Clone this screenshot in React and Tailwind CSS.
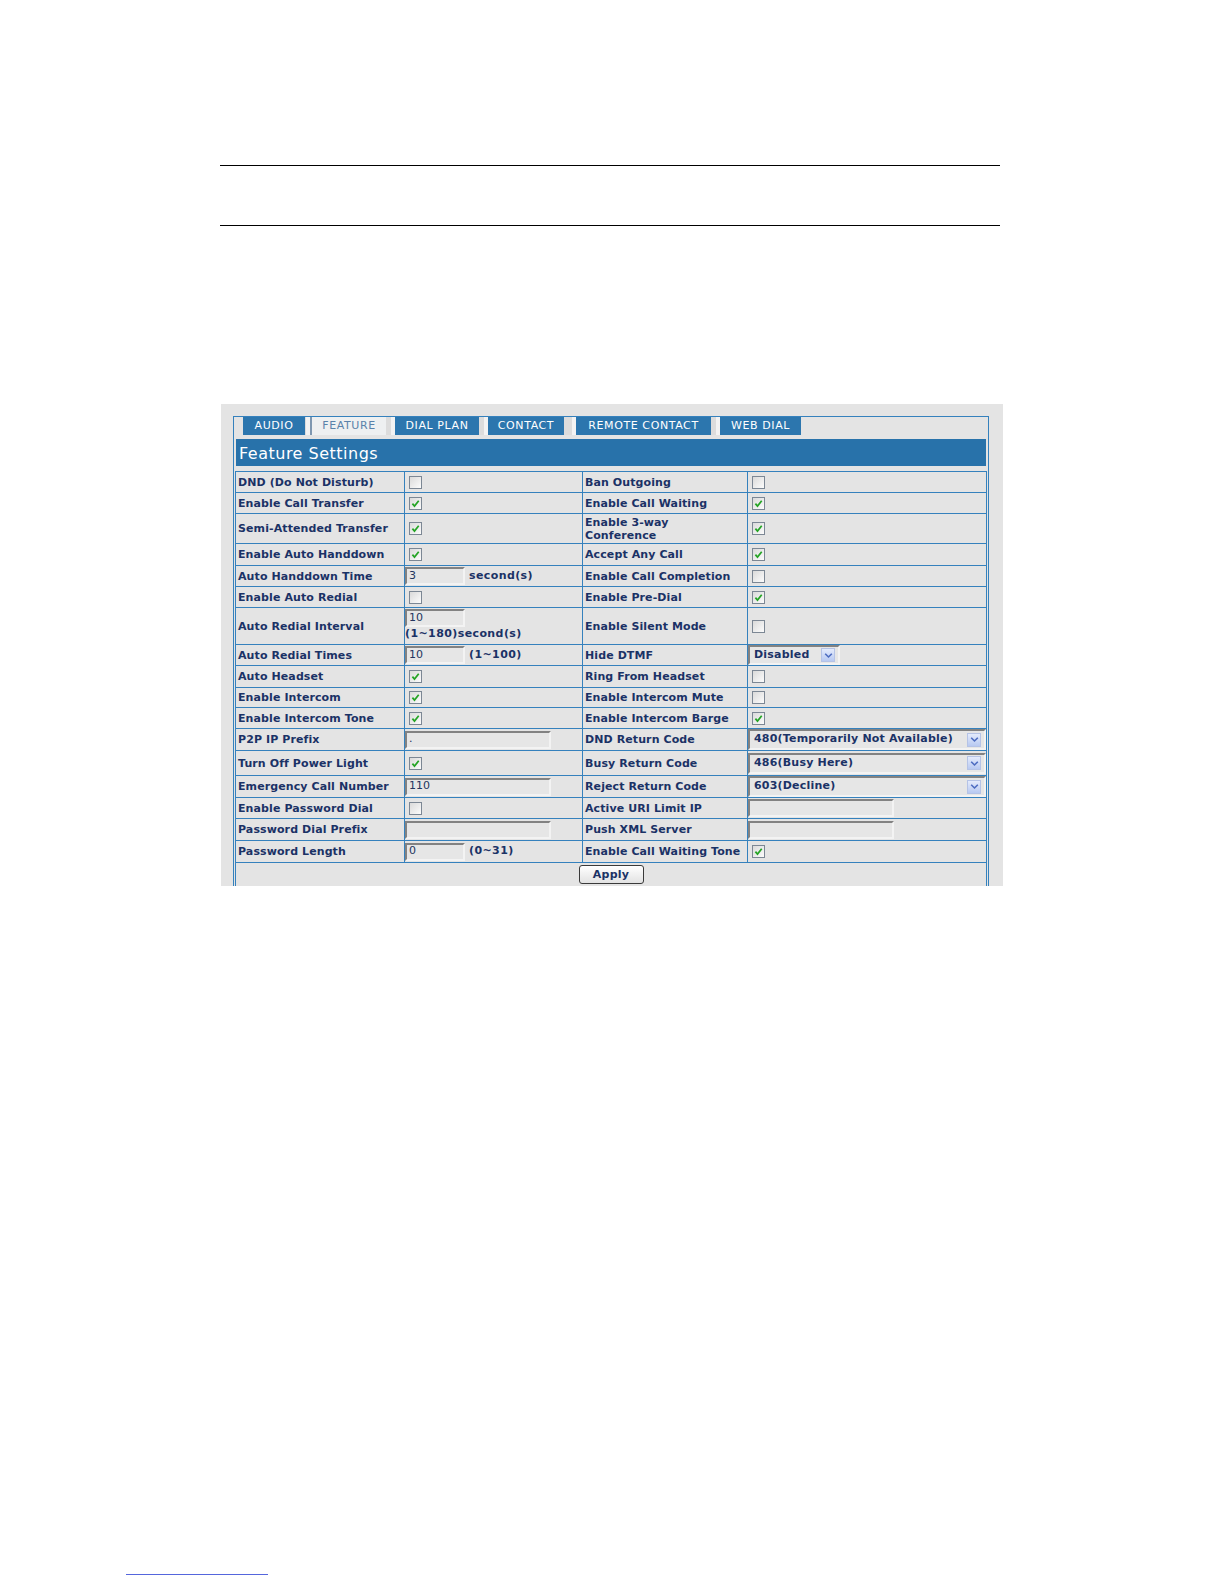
import React from 'react';

function Check({ on }) {
  return (
    <span className="flex w-[13px] h-[13px] border border-[#7c8794] bg-linear-to-br from-[#dadada] to-[#fcfcfc] items-center justify-center">
      {on && (
        <svg width="11" height="11" viewBox="0 0 11 11">
          <path d="M2.4 5.6 L4.5 8.1 L8.7 2.8" fill="none" stroke="#24a424" strokeWidth="1.7" />
        </svg>
      )}
    </span>
  );
}

function TextInput({ w, value }) {
  return (
    <span
      className={`${w} h-[18px] border-2 border-t-[#828282] border-l-[#828282] border-r-[#f3f3f3] border-b-[#f3f3f3] bg-[#e6e6e6] flex items-center pl-[2px] text-[11px] font-normal text-[#24355f]`}
    >
      {value}
    </span>
  );
}

function Arrow() {
  return (
    <span className="flex w-[14px] h-[14px] border border-[#b5c3e6] bg-linear-to-b from-[#e4ebfc] to-[#b8c9f1] items-center justify-center">
      <svg width="9" height="7" viewBox="0 0 9 7">
        <path d="M1.2 1.8 L4.5 5 L7.8 1.8" fill="none" stroke="#4d6cc0" strokeWidth="1.6" />
      </svg>
    </span>
  );
}

function Select({ w, h, value }) {
  return (
    <span
      className={`${w} ${h} border-2 border-t-[#828282] border-l-[#828282] border-r-[#f3f3f3] border-b-[#f3f3f3] bg-[#e6e6e6] flex items-center justify-between pl-[4px] pr-[3px] font-bold text-[11px] tracking-[0.2px] text-[#1b3266]`}
    >
      <span>{value}</span>
      <Arrow />
    </span>
  );
}

const cb = (on) => ({ type: 'cb', on });

const rows = [
  { h: 'h-[21px]', l: 'DND (Do Not Disturb)', lv: cb(false), r: 'Ban Outgoing', rv: cb(false) },
  { h: 'h-[21px]', l: 'Enable Call Transfer', lv: cb(true), r: 'Enable Call Waiting', rv: cb(true) },
  { h: 'h-[30px]', l: 'Semi-Attended Transfer', lv: cb(true), r: 'Enable 3-way', r2: 'Conference', rv: cb(true) },
  { h: 'h-[22px]', l: 'Enable Auto Handdown', lv: cb(true), r: 'Accept Any Call', rv: cb(true) },
  { h: 'h-[21px]', l: 'Auto Handdown Time', lv: { type: 'inunit', value: '3', unit: 'second(s)' }, r: 'Enable Call Completion', rv: cb(false) },
  { h: 'h-[21px]', l: 'Enable Auto Redial', lv: cb(false), r: 'Enable Pre-Dial', rv: cb(true) },
  { h: 'h-[37px]', l: 'Auto Redial Interval', lv: { type: 'instack', value: '10', unit: '(1~180)second(s)' }, r: 'Enable Silent Mode', rv: cb(false) },
  { h: 'h-[21px]', l: 'Auto Redial Times', lv: { type: 'inunit', value: '10', unit: '(1~100)' }, r: 'Hide DTMF', rv: { type: 'selshort', value: 'Disabled' } },
  { h: 'h-[22px]', l: 'Auto Headset', lv: cb(true), r: 'Ring From Headset', rv: cb(false) },
  { h: 'h-[20px]', l: 'Enable Intercom', lv: cb(true), r: 'Enable Intercom Mute', rv: cb(false) },
  { h: 'h-[21px]', l: 'Enable Intercom Tone', lv: cb(true), r: 'Enable Intercom Barge', rv: cb(true) },
  { h: 'h-[22px]', l: 'P2P IP Prefix', lv: { type: 'inlong', value: '.' }, r: 'DND Return Code', rv: { type: 'sellong', value: '480(Temporarily Not Available)' } },
  { h: 'h-[25px]', l: 'Turn Off Power Light', lv: cb(true), r: 'Busy Return Code', rv: { type: 'sellong', value: '486(Busy Here)' } },
  { h: 'h-[22px]', l: 'Emergency Call Number', lv: { type: 'inlong', value: '110' }, r: 'Reject Return Code', rv: { type: 'sellong', value: '603(Decline)' } },
  { h: 'h-[21px]', l: 'Enable Password Dial', lv: cb(false), r: 'Active URI Limit IP', rv: { type: 'inlong', value: '' } },
  { h: 'h-[22px]', l: 'Password Dial Prefix', lv: { type: 'inlong', value: '' }, r: 'Push XML Server', rv: { type: 'inlong', value: '' } },
  { h: 'h-[22px]', l: 'Password Length', lv: { type: 'inunit', value: '0', unit: '(0~31)' }, r: 'Enable Call Waiting Tone', rv: cb(true) },
];

const cellBase = 'border-r border-b border-[#3581bd] flex';

function Value({ v, h }) {
  if (v.type === 'cb') {
    return (
      <div className={`${cellBase} ${h} items-center pl-[4px]`}>
        <Check on={v.on} />
      </div>
    );
  }
  if (v.type === 'inunit') {
    return (
      <div className={`${cellBase} ${h} items-center gap-[4px]`}>
        <TextInput w="w-[60px]" value={v.value} />
        <span className="font-bold tracking-[0.4px]">{v.unit}</span>
      </div>
    );
  }
  if (v.type === 'instack') {
    return (
      <div className={`${cellBase} ${h} flex-col pt-px`}>
        <TextInput w="w-[60px]" value={v.value} />
        <span className="font-bold tracking-[0.4px] leading-[14px]">{v.unit}</span>
      </div>
    );
  }
  if (v.type === 'inlong') {
    return (
      <div className={`${cellBase} ${h} items-center`}>
        <TextInput w="w-[146px]" value={v.value} />
      </div>
    );
  }
  if (v.type === 'selshort') {
    return (
      <div className={`${cellBase} ${h} items-center`}>
        <Select w="w-[92px]" h="h-[20px]" value={v.value} />
      </div>
    );
  }
  return (
    <div className={`${cellBase} ${h} items-center`}>
      <Select w="w-[238px]" h="h-[21px]" value={v.value} />
    </div>
  );
}

function Label({ text, text2, h }) {
  return (
    <div className={`${cellBase} ${h} items-center px-[2px] font-bold leading-[13px] tracking-[0.1px]`}>
      {text2 ? (
        <span>
          {text}
          <br />
          {text2}
        </span>
      ) : (
        <span>{text}</span>
      )}
    </div>
  );
}

function Tab({ w, children, active }) {
  if (active) {
    return (
      <div className={`${w} h-full border-l-2 border-[#7f97b0] bg-[#eef0f1] text-[#5a82aa] flex items-center justify-center tracking-[0.6px]`}>
        {children}
      </div>
    );
  }
  return (
    <div className={`${w} h-full bg-[#2c76ae] text-white flex items-center justify-center tracking-[0.6px]`}>
      {children}
    </div>
  );
}

function Gap({ w }) {
  return (
    <div className={`${w} h-full bg-[#dcdcdc] flex justify-end`}>
      <div className="w-[4px] h-full bg-[#f3f3f3]" />
    </div>
  );
}

export default function App() {
  return (
    <div className="w-[1224px] h-[1584px] bg-white flex flex-col font-['DejaVu_Sans',sans-serif] text-[11px] text-[#1b3266]">
      <div className="mt-[165px] ml-[220px] w-[780px] h-px bg-black" />
      <div className="mt-[59px] ml-[220px] w-[780px] h-px bg-black" />

      <div className="mt-[178px] ml-[221px] w-[782px] h-[482px] bg-[#e4e4e4] pt-[12px] pl-[12px] overflow-hidden">
        <div className="w-[756px] h-[470px] border-l border-t border-r border-[#3581bd] px-px">
          <div className="flex h-[18px] pl-[8px] text-[11px]">
            <Tab w="w-[62px]">AUDIO</Tab>
            <Gap w="w-[5px]" />
            <Tab w="w-[76px]" active>FEATURE</Tab>
            <Gap w="w-[9px]" />
            <Tab w="w-[84px]">DIAL PLAN</Tab>
            <Gap w="w-[9px]" />
            <Tab w="w-[76px]">CONTACT</Tab>
            <Gap w="w-[12px]" />
            <Tab w="w-[135px]">REMOTE CONTACT</Tab>
            <Gap w="w-[9px]" />
            <Tab w="w-[81px]">WEB DIAL</Tab>
          </div>

          <div className="mt-[4px] mx-px h-[27px] bg-[#2872aa] flex items-center pl-[3px] pt-[3px] text-white text-[16px] tracking-[0.5px]">
            Feature Settings
          </div>

          <div className="mt-[5px] grid grid-cols-[169px_178px_165px_239px] border-l border-t border-[#3581bd]">
            {rows.map((row, i) => (
              <React.Fragment key={i}>
                <Label text={row.l} h={row.h} />
                <Value v={row.lv} h={row.h} />
                <Label text={row.r} text2={row.r2} h={row.h} />
                <Value v={row.rv} h={row.h} />
              </React.Fragment>
            ))}
            <div className="col-span-4 h-[24px] border-r border-[#3581bd] flex justify-center pt-[2px]">
              <button className="w-[65px] h-[19px] rounded-[3px] border border-[#3a3a3a] bg-linear-to-b from-[#ffffff] to-[#e2e2e2] font-bold text-[11px] tracking-[0.3px] text-[#1b3266] leading-none">
                Apply
              </button>
            </div>
          </div>
        </div>
      </div>

      <div className="mt-[688px] ml-[126px] w-[142px] h-px bg-[#5566dd]" />
    </div>
  );
}
